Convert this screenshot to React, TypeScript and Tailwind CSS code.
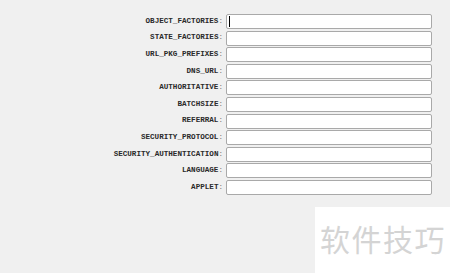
import React from 'react';

const fields = [
  'OBJECT_FACTORIES',
  'STATE_FACTORIES',
  'URL_PKG_PREFIXES',
  'DNS_URL',
  'AUTHORITATIVE',
  'BATCHSIZE',
  'REFERRAL',
  'SECURITY_PROTOCOL',
  'SECURITY_AUTHENTICATION',
  'LANGUAGE',
  'APPLET',
];

function App() {
  return (
    <main className="relative w-[450px] h-[273px] overflow-hidden bg-[#f0f0f0]">
      <div className="grid grid-cols-[224px_208px] gap-y-[1.6px] pt-[14px]">
        {fields.map((name, i) => (
          <React.Fragment key={name}>
            <label
              htmlFor={name}
              className="flex h-[15px] items-center justify-end pr-[1px] text-[7.6px] font-bold text-[#2a2a2a] [font-family:'Liberation_Mono',monospace]"
            >
              {name}
              <span className="font-normal text-[#777]">:</span>
            </label>
            <div className="ml-[2px] flex h-[15px] items-center rounded-[2px] border border-[#a9a9a9] bg-white">
              {i === 0 && <span className="ml-[2px] h-[11px] w-[1px] bg-black" />}
            </div>
          </React.Fragment>
        ))}
      </div>
      <div className="absolute left-[315px] top-[207px] flex h-[66px] w-[135px] items-center bg-white pl-[5px] pb-[4px]">
        <span className="text-[30px] leading-none tracking-[1.5px] text-[#d4d4d4] [font-family:'Noto_Sans_CJK_SC',sans-serif]">
          软件技巧
        </span>
      </div>
    </main>
  );
}

export default App;
